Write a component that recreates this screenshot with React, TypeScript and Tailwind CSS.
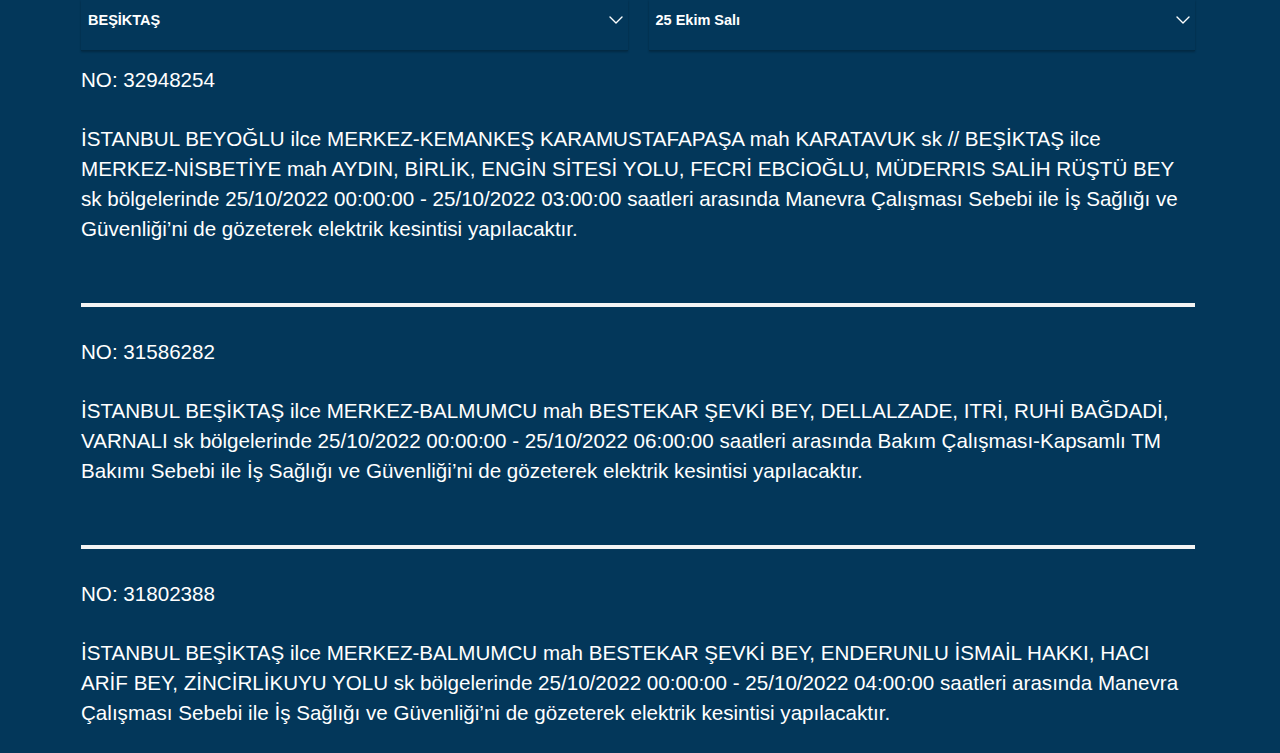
import { ChevronDown } from "lucide-react";

type Notice = {
  no: string;
  text: string;
};

const notices: Notice[] = [
  {
    no: "32948254",
    text:
      "İSTANBUL BEYOĞLU ilce MERKEZ-KEMANKEŞ KARAMUSTAFAPAŞA mah KARATAVUK sk // BEŞİKTAŞ ilce MERKEZ-NİSBETİYE mah AYDIN, BİRLİK, ENGİN SİTESİ YOLU, FECRİ EBCİOĞLU, MÜDERRIS SALİH RÜŞTÜ BEY sk bölgelerinde 25/10/2022 00:00:00 - 25/10/2022 03:00:00 saatleri arasında Manevra Çalışması Sebebi ile İş Sağlığı ve Güvenliği’ni de gözeterek elektrik kesintisi yapılacaktır.",
  },
  {
    no: "31586282",
    text:
      "İSTANBUL BEŞİKTAŞ ilce MERKEZ-BALMUMCU mah BESTEKAR ŞEVKİ BEY, DELLALZADE, ITRİ, RUHİ BAĞDADİ, VARNALI sk bölgelerinde 25/10/2022 00:00:00 - 25/10/2022 06:00:00 saatleri arasında Bakım Çalışması-Kapsamlı TM Bakımı Sebebi ile İş Sağlığı ve Güvenliği’ni de gözeterek elektrik kesintisi yapılacaktır.",
  },
  {
    no: "31802388",
    text:
      "İSTANBUL BEŞİKTAŞ ilce MERKEZ-BALMUMCU mah BESTEKAR ŞEVKİ BEY, ENDERUNLU İSMAİL HAKKI, HACI ARİF BEY, ZİNCİRLİKUYU YOLU sk bölgelerinde 25/10/2022 00:00:00 - 25/10/2022 04:00:00 saatleri arasında Manevra Çalışması Sebebi ile İş Sağlığı ve Güvenliği’ni de gözeterek elektrik kesintisi yapılacaktır.",
  },
];

function SelectBox({ label }: { label: string }) {
  return (
    <div className="flex h-[51px] items-start justify-between border-b border-[#022a44] pl-[7px] pt-[11px] shadow-[0_1px_2px_rgba(0,0,0,0.25)]">
      <span className="text-[14.5px] font-bold leading-[18px] text-white">{label}</span>
      <ChevronDown size={24} strokeWidth={1.4} className="mt-[-3px] text-white" />
    </div>
  );
}

export default function App() {
  return (
    <div
      className="min-h-screen bg-[#03375a] text-white"
      style={{ fontFamily: '"Liberation Sans", Arial, sans-serif' }}
    >
      <div className="ml-[81px] w-[1114px]">
        <div className="grid grid-cols-2 gap-[21px]">
          <SelectBox label="BEŞİKTAŞ" />
          <SelectBox label="25 Ekim Salı" />
        </div>

        {notices.map((n, i) => (
          <div key={n.no}>
            {i > 0 && <div className="h-[4px] bg-[#f4f4f4]" />}
            <div className={i > 0 ? "pt-[30px] pb-[59px]" : "pt-[14px] pb-[59px]"}>
              <p className="text-[20.6px] leading-[30px]">NO: {n.no}</p>
              <p className="mt-[29px] text-[20.6px] leading-[30px]">{n.text}</p>
            </div>
          </div>
        ))}
      </div>
    </div>
  );
}
